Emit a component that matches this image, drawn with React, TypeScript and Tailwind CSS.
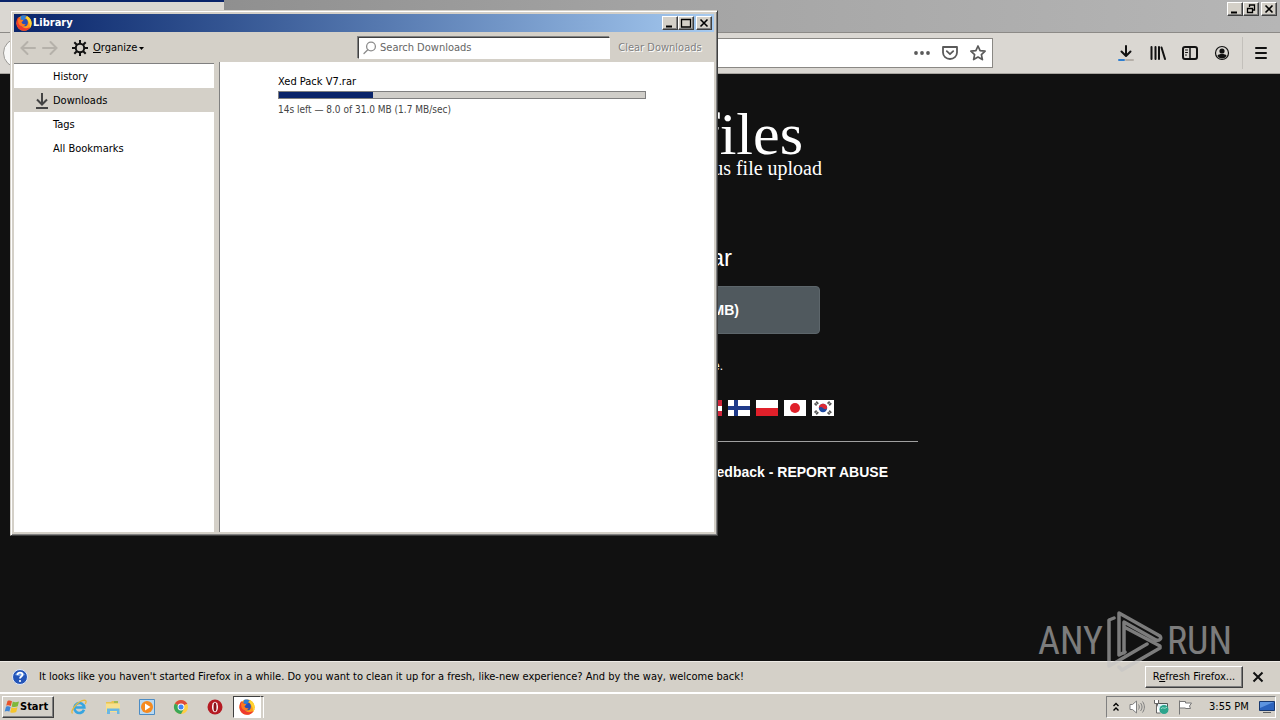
import type { ReactNode } from 'react'

const FOLDERS = ['History', 'Downloads', 'Tags', 'All Bookmarks']

const download = {
  name: 'Xed Pack V7.rar',
  done: 8.0,
  total: 31.0,
  status: '14s left — 8.0 of 31.0 MB (1.7 MB/sec)',
}

function FirefoxIcon({ className }: { className: string }) {
  return (
    <svg viewBox="0 0 16 16" className={className} aria-hidden="true">
      <circle cx="8" cy="8.2" r="7.6" fill="#ff9a1a" />
      <path d="M2.2 2.2C.2 5-.3 9 1.6 12.2c2 3.2 6 4.4 9.400 3 2.500-1 4.100-3 4.500-5.200-2 3.200-5.500 3.800-8 2.500-3-1.500-3.600-5-2-7.500z" fill="#ef3b2d" />
      <path d="M9.500.6c2.500.6 5 2.600 5.900 5.600.7 3-.1 5.600-1.900 7.300.8-2.500.4-5-1-6.900C11 4.700 10.200 3 9.500.6z" fill="#ffd531" />
      <circle cx="8" cy="7.400" r="3.900" fill="#2a4fb5" />
      <path d="M5 .9C7 .1 9.500.4 11 1.700 9.500 2 8.900 3 9.200 4.200L7 5.200 4.300 4z" fill="#2f7fd6" />
      <path d="M2.300 3.200l2.500 1.600c1-.3 2-.1 2.600.5-.2.900-1.200 1.200-1.900 2 .5 1.800 2.300 2.400 4.100 1.600-.6 2-3 2.900-5 1.900C2.300 9.600 1.700 6 2.300 3.200z" fill="#ff7a1c" />
    </svg>
  )
}

function CaptionButton({ label, children }: { label: string; children: ReactNode }) {
  return (
    <button
      type="button"
      aria-label={label}
      className="flex h-[14px] w-4 items-center justify-center border border-t-white border-r-[#404040] border-b-[#404040] border-l-white bg-[#d4d0c8] shadow-[inset_-1px_-1px_0_#808080]"
    >
      <svg viewBox="0 0 12 10" className="h-[10px] w-3 shrink-0" fill="none" stroke="#000">
        {children}
      </svg>
    </button>
  )
}

function CloseGlyph() {
  return <path d="M2.500 1.500l7 7M9.500 1.500l-7 7" strokeWidth="1.600" />
}

function ToolButton({ label, children }: { label: string; children: ReactNode }) {
  return (
    <button type="button" aria-label={label} className="flex size-4 items-center justify-center">
      <svg viewBox="0 0 16 16" className="size-4" fill="none" stroke="#111" strokeWidth="2" strokeLinecap="round" strokeLinejoin="round">
        {children}
      </svg>
    </button>
  )
}

function BrowserChrome() {
  return (
    <header>
      {/* Tab strip */}
      <div className="flex h-8 bg-linear-to-r from-[#858585] via-[#a3a3a3] to-[#b6b6b6]">
        <div className="w-[224px] border-t-2 border-[#0a246a] bg-[#dad7d2]" />
        <div className="flex flex-1 justify-end gap-[2px] pt-[2px] pr-[3px]">
          <div className="flex">
            <CaptionButton label="Minimize browser"><path d="M2 8.500h6" strokeWidth="2" /></CaptionButton>
            <CaptionButton label="Restore browser">
              <path d="M4.500 3V1h5v5H8M4 1h6M2.500 4.500h5v4h-5zM2 4.500h6" strokeWidth="1.300" />
            </CaptionButton>
          </div>
          <CaptionButton label="Close browser"><CloseGlyph /></CaptionButton>
        </div>
      </div>

      {/* Navigation bar */}
      <div className="flex h-[42px] items-center border-t border-b border-t-[#8c8a87] border-b-[#a8a5a0] bg-[#dad7d2] pr-[11px] pl-[3px]">
        <button type="button" aria-label="Go back" className="size-[30px] rounded-full border border-[#9a9894] bg-[#f8f8f7]" />
        <div className="ml-[200px] flex h-[30px] flex-1 items-center gap-3 border border-[#8a8884] bg-white pr-[6px]">
          <input aria-label="Address" className="h-full min-w-0 flex-1 outline-none" />
          <button type="button" aria-label="Page actions">
            <svg viewBox="0 0 16 16" className="size-4" fill="#5a5a5a">
              <circle cx="2" cy="8" r="1.900" /><circle cx="8" cy="8" r="1.900" /><circle cx="14" cy="8" r="1.900" />
            </svg>
          </button>
          <button type="button" aria-label="Save to Pocket">
            <svg viewBox="0 0 16 16" className="size-4" fill="none" stroke="#5a5a5a" strokeWidth="1.800" strokeLinecap="round" strokeLinejoin="round">
              <path d="M1 2h14v5.500a7 6.500 0 0 1-14 0zM4.800 6.200L8 9.200l3.200-3" />
            </svg>
          </button>
          <button type="button" aria-label="Bookmark this page">
            <svg viewBox="0 0 16 16" className="size-4" fill="none" stroke="#5a5a5a" strokeWidth="1.700" strokeLinejoin="round">
              <path d="M8 1l2.100 4.600 5 .6-3.700 3.400 1 5L8 12.100l-4.400 2.500 1-5L.9 6.200l5-.6z" />
            </svg>
          </button>
        </div>
        <div className="ml-[125px] flex items-center gap-4">
          <ToolButton label="Downloads">
            <path d="M8 1v9M3.500 6.500L8 11l4.500-4.500" />
            <path d="M1 15h5" stroke="#2f7fd0" />
            <path d="M8 15h7" stroke="#b5afa8" />
          </ToolButton>
          <ToolButton label="Library"><path d="M1.500 2v12M5.500 2v12M9 2v12M11.500 2.500L15 14" /></ToolButton>
          <ToolButton label="Sidebars">
            <rect x="1" y="2" width="14" height="12" rx="2" />
            <path d="M8 2v12" strokeWidth="1.500" />
            <path d="M3.500 5h2M3.500 7.500h2M3.500 10h1" strokeWidth="1" />
          </ToolButton>
          <ToolButton label="Account">
            <circle cx="8" cy="8" r="6.500" strokeWidth="1.200" />
            <circle cx="8" cy="6" r="2.600" fill="#111" stroke="none" />
            <path d="M3.500 10.500c1-2 8-2 9 0-1 4-8 4-9 0z" fill="#111" stroke="none" />
          </ToolButton>
          <div className="-ml-1 flex h-8 items-center border-l border-[#c3c0bb] pl-[10px]">
            <ToolButton label="Menu"><path d="M3 3h10M3 8h10M3 13h10" /></ToolButton>
          </div>
        </div>
      </div>
    </header>
  )
}

function Flags() {
  return (
    <div className="flex justify-end gap-[6px] pr-[84px]">
      <svg viewBox="0 0 22 16" className="h-4 w-[22px]" role="img" aria-label="Danish">
        <path d="M0 0h22v16H0z" fill="#d0253a" /><path d="M0 6h22v4H0zM6 0h4v16H6zM17 6h5v5h-5z" fill="#fff" />
      </svg>
      <svg viewBox="0 0 22 16" className="h-4 w-[22px]" role="img" aria-label="Finnish">
        <path d="M0 0h22v16H0z" fill="#fff" /><path d="M0 6h22v4H0zM6 0h4v16H6z" fill="#1f3a8a" />
      </svg>
      <svg viewBox="0 0 22 16" className="h-4 w-[22px]" role="img" aria-label="Polish">
        <path d="M0 0h22v8H0z" fill="#fff" /><path d="M0 8h22v8H0z" fill="#e0202a" />
      </svg>
      <svg viewBox="0 0 22 16" className="h-4 w-[22px]" role="img" aria-label="Japanese">
        <path d="M0 0h22v16H0z" fill="#fff" /><circle cx="11" cy="8" r="5" fill="#e0202a" />
      </svg>
      <svg viewBox="0 0 22 16" className="h-4 w-[22px]" role="img" aria-label="Korean">
        <path d="M0 0h22v16H0z" fill="#fff" />
        <circle cx="11" cy="8" r="4.200" fill="#1f4aa0" />
        <path d="M6.800 8a4.200 4.200 0 0 1 8.400 0c-1.500 2-3 1-4.200 0s-2.700-1.500-4.200 0z" fill="#dc2a35" />
        <path d="M3 5l3-3M16 2l3 3M3 11l3 3M16 14l3-3" stroke="#555" strokeWidth="3" strokeDasharray="1.800 .4" />
      </svg>
    </div>
  )
}

function SitePage() {
  return (
    <main className="flex-1 bg-[#111] font-['Liberation_Sans',sans-serif] text-white">
      <div className="mx-auto w-[556px] pt-8 text-right">
        <h1 className="pr-[115px] font-['Liberation_Serif',serif] text-[60px] leading-[56px]">files</h1>
        <p className="-mt-1 pr-[96px] font-['Liberation_Serif',serif] text-xl leading-5">us file upload</p>
        <h2 className="mt-16 pr-[186px] text-2xl leading-8">ar</h2>
        <div className="mt-3 flex justify-end pr-[98px]">
          <button type="button" className="h-12 w-[360px] rounded-sm border border-[#5d666b] bg-[#50595e] pr-20 text-right text-sm font-bold">
            MB)
          </button>
        </div>
        <p className="mt-6 mb-[26px] pr-[195px] text-xs leading-4">e.</p>
        <Flags />
        <hr className="mt-[25px] border-[#a0a0a0]" />
        <p className="mt-5 pr-[30px] text-sm leading-5 font-bold">
          <a href="#feedback">Feedback</a> - <a href="#abuse">REPORT ABUSE</a>
        </p>
      </div>
    </main>
  )
}

function LibraryWindow() {
  const percent = (download.done / download.total) * 100
  return (
    <section
      aria-label="Library"
      className="absolute top-[10px] left-[10px] flex h-[526px] w-[708px] flex-col border border-t-[#d4d0c8] border-r-[#404040] border-b-[#404040] border-l-[#d4d0c8] bg-[#d4d0c8] p-[3px] shadow-[inset_1px_1px_0_#fff,inset_-1px_-1px_0_#808080]"
    >
      <div className="flex h-[18px] items-center bg-linear-to-r from-[#0a246a] to-[#a6caf0] px-[2px] text-white">
        <FirefoxIcon className="size-4" />
        <h2 className="ml-[1px] flex-1 text-[11px] font-bold">Library</h2>
        <CaptionButton label="Minimize"><path d="M2 8.500h6" strokeWidth="2" /></CaptionButton>
        <CaptionButton label="Maximize"><path d="M1.500 1v8h9V1M1 1.500h10" strokeWidth="1.300" /></CaptionButton>
        <div className="ml-[2px]">
          <CaptionButton label="Close"><CloseGlyph /></CaptionButton>
        </div>
      </div>

      {/* Toolbar */}
      <div className="flex h-[30px] items-center pt-[2px] pr-[12px] pl-[6px]">
        <button type="button" aria-label="Back" disabled>
          <svg viewBox="0 0 16 16" className="size-4" fill="none" stroke="#b5b1aa" strokeWidth="2" strokeLinecap="round"><path d="M15 8H1.500M7.500 2L1.500 8l6 6" /></svg>
        </button>
        <button type="button" aria-label="Forward" disabled className="ml-[6px]">
          <svg viewBox="0 0 16 16" className="size-4" fill="none" stroke="#b5b1aa" strokeWidth="2" strokeLinecap="round"><path d="M1 8h13.500M8.500 2l6 6-6 6" /></svg>
        </button>
        <button type="button" className="ml-[14px] flex items-center">
          <svg viewBox="0 0 16 16" className="size-4" fill="none" stroke="#111" strokeWidth="2">
            <circle cx="8" cy="8" r="4.200" />
            <path d="M8 0v3.500M8 12.500V16M0 8h3.500M12.500 8H16M2.300 2.300l2.500 2.500M11.200 11.200l2.500 2.500M13.700 2.300l-2.500 2.500M4.800 11.200l-2.500 2.500" />
          </svg>
          <span className="ml-[5px]"><u>O</u>rganize</span>
          <svg viewBox="0 0 5 3" className="ml-[2px] h-[3px] w-[5px]"><path d="M0 0h5L2.500 3z" /></svg>
        </button>
        <label className="ml-auto flex h-[22px] w-[252px] items-center border border-t-[#404040] border-r-white border-b-white border-l-[#404040] bg-white pl-1 shadow-[-1px_-1px_0_#808080]">
          <svg viewBox="0 0 14 14" className="size-[14px]" fill="none" stroke="#8c8c8c" strokeWidth="1.300" strokeLinecap="round">
            <circle cx="8" cy="5.500" r="4.400" /><path d="M4.800 8.700L1 12.500" />
          </svg>
          <input type="search" aria-label="Search Downloads" placeholder="Search Downloads" className="ml-[3px] min-w-0 flex-1 outline-none placeholder:text-[#666]" />
        </label>
        <button type="button" disabled className="ml-2 w-[84px] whitespace-nowrap text-[#808080] [text-shadow:1px_1px_0_#fff]">
          Clear Downloads
        </button>
      </div>

      <div className="flex min-h-0 flex-1">
        <nav className="mt-[1px] w-[200px] border-t border-[#808080] bg-white">
          {FOLDERS.map((folder) => (
            <a
              key={folder}
              href={'#' + folder}
              className={'flex h-6 items-center pt-[2px] pl-[21px] ' + (folder === 'Downloads' ? 'bg-[#d4d0c8]' : '')}
            >
              <span className="mr-[2px] flex w-4">
                {folder === 'Downloads' && (
                  <svg viewBox="0 0 16 16" className="size-4" fill="none" stroke="#444" strokeWidth="2">
                    <path d="M7 0v11M2 6.500l5 5 5-5M1 15h12" />
                  </svg>
                )}
              </span>
              {folder}
            </a>
          ))}
        </nav>
        <div className="w-[6px] border-r border-[#808080]" />
        <div className="flex-1 bg-white pt-[13px] pr-[68px] pl-[58px]">
          <p className="leading-[14px]">{download.name}</p>
          <div
            role="progressbar"
            aria-label={download.name}
            aria-valuenow={Math.round(percent)}
            className="mt-[2px] h-2 border border-[#808080] bg-[#d0cec9]"
          >
            <div className="h-full bg-[#0a246a]" style={{ width: percent + '%' }} />
          </div>
          <p className="mt-1 text-[10px] leading-[14px] text-[#444]">{download.status}</p>
        </div>
      </div>
    </section>
  )
}

function NotificationBar() {
  return (
    <div className="flex h-[31px] items-center border-t border-[#eeebe6] bg-[#d4d0c8] pr-4 pl-3">
      <svg viewBox="0 0 16 16" className="size-4" aria-hidden="true">
        <circle cx="8" cy="8" r="7.500" fill="#2455b8" stroke="#dfe9fa" />
        <path d="M3 6a5.500 5 0 0 1 10 0c-3 1.500-7 1.500-10 0z" fill="#6e9be6" />
        <path d="M5.500 6c0-3.200 5-3 5-.2C10.500 7.500 8 7.600 8 9.500" fill="none" stroke="#fff" strokeWidth="1.800" />
        <circle cx="8" cy="12" r="1.100" fill="#fff" />
      </svg>
      <p className="ml-[11px] flex-1 whitespace-nowrap">
        It looks like you haven't started Firefox in a while. Do you want to clean it up for a fresh, like-new experience? And by the way, welcome back!
      </p>
      <button
        type="button"
        className="h-[22px] w-[98px] whitespace-nowrap border border-t-white border-r-[#404040] border-b-[#404040] border-l-white shadow-[inset_-1px_-1px_0_#808080]"
      >
        R<u>e</u>fresh Firefox...
      </button>
      <button type="button" aria-label="Dismiss" className="ml-[9px]">
        <svg viewBox="0 0 12 12" className="size-3" stroke="#111" strokeWidth="2"><path d="M1.500 1.500l9 9M10.500 1.500l-9 9" /></svg>
      </button>
    </div>
  )
}

function QuickLaunch() {
  return (
    <div className="ml-[17px] flex items-center gap-[18px]">
      <button type="button" aria-label="Internet Explorer">
        <svg viewBox="0 0 16 16" className="size-4" fill="none">
          <path d="M13 10.800A5 5 0 1 1 13.300 8.500H4.500" stroke="#37a5e0" strokeWidth="2.600" />
          <path d="M1.500 14.500C-1 12 7 1.500 13.500 1.200c2.200 0 1.800 2 .8 3.800" stroke="#e8b93c" strokeWidth="1.300" />
        </svg>
      </button>
      <button type="button" aria-label="Windows Explorer">
        <svg viewBox="0 0 16 16" className="size-4">
          <path d="M1 3h5l1-1h6v3H1z" fill="#e9c351" /><path d="M1 4.500h14V13H1z" fill="#f7e08d" />
          <path d="M2 9.500h12.500V15H12v-3H5v3H2z" fill="#6bb7e3" /><path d="M9 3h4" stroke="#5fb257" />
        </svg>
      </button>
      <button type="button" aria-label="Media Player">
        <svg viewBox="0 0 16 16" className="size-4">
          <path d="M.5.500h15v15H.5z" fill="#b9d9f2" stroke="#4c8cc4" />
          <circle cx="8" cy="8" r="6" fill="#f58a1f" /><path d="M6 4.500v7L11.500 8z" fill="#fff" />
        </svg>
      </button>
      <button type="button" aria-label="Chrome">
        <svg viewBox="0 0 16 16" className="size-4">
          <circle cx="8" cy="8" r="7" fill="#ffce44" />
          <path d="M8 8L1.900 4.500A7 7 0 0 1 14.100 4.500z" fill="#de4b3b" /><path d="M8 8L1.900 4.500A7 7 0 0 0 8 15l2.800-5z" fill="#3aa757" />
          <path d="M8 4.500h6.100" stroke="#de4b3b" /><circle cx="8" cy="8" r="3.400" fill="#fff" /><circle cx="8" cy="8" r="2.500" fill="#4285f4" />
        </svg>
      </button>
      <button type="button" aria-label="Opera">
        <svg viewBox="0 0 16 16" className="size-4">
          <circle cx="8" cy="8" r="7.500" fill="#b51a22" /><ellipse cx="8" cy="8" rx="3" ry="5.300" fill="#fff" /><ellipse cx="8" cy="8" rx="1.500" ry="4.500" fill="#8c1219" />
        </svg>
      </button>
    </div>
  )
}

function Taskbar() {
  return (
    <footer className="flex h-7 items-center border-t-2 border-white bg-[#d4d0c8] pr-1 pl-[2px]">
      <button
        type="button"
        className="flex h-[22px] w-[52px] items-center border border-t-white border-r-[#404040] border-b-[#404040] border-l-white pl-[1px] font-bold shadow-[inset_-1px_-1px_0_#808080]"
      >
        <svg viewBox="0 0 16 16" className="size-4 shrink-0">
          <path d="M3.500 2c1.500-.8 3-.6 4.500.2L6.800 7C5.300 6.200 3.800 6 2.200 6.800z" fill="#e8532a" />
          <path d="M8.800 2.600c1.500.8 3.500.9 6.200-.2l-1.300 4.800c-2 1-4.400 1-6 .2z" fill="#7fb83a" />
          <path d="M2 7.700c1.600-.8 3-.6 4.600.2l-1.200 4.700c-1.500-.8-3-.9-4.700-.1z" fill="#3f86d6" />
          <path d="M7.500 8.300c1.600.8 4 .8 6 0l-1.300 4.800c-2 1-4.300.9-6 .1z" fill="#f6c52c" />
        </svg>
        Start
      </button>
      <QuickLaunch />
      <button
        type="button"
        aria-label="Firefox"
        className="ml-[10px] flex h-[22px] w-7 items-center justify-center border border-t-[#404040] border-r-white border-b-white border-l-[#404040] bg-white"
      >
        <FirefoxIcon className="size-4" />
      </button>
      <div className="h-[22px] w-[3px] border-t border-r border-t-[#404040] border-r-white" />

      {/* Tray */}
      <div className="ml-auto flex h-[22px] w-[170px] items-center border border-t-[#808080] border-r-white border-b-white border-l-[#808080] pl-[5px]">
        <svg viewBox="0 0 8 10" className="h-[10px] w-2" fill="none" stroke="#000" strokeWidth="1.400"><path d="M1.500 4L4 1.500 6.500 4M1.500 8.500L4 6l2.500 2.500" /></svg>
        <svg viewBox="0 0 16 16" className="ml-[9px] size-4" fill="none" stroke="#808080">
          <path d="M1 5.500h2.500L7.500 2v12l-4-3.500H1z" fill="#fff" /><path d="M9.500 5.500c1 1.500 1 3.500 0 5M11.500 4c2 2.500 2 5.500 0 8M13.500 2.500c2.500 3.500 2.500 7.500 0 11" />
        </svg>
        <svg viewBox="0 0 16 16" className="ml-2 size-4">
          <path d="M4.500 4.500h10v8h-10z" fill="#dff1f5" stroke="#555" /><path d="M1.500 1v3.500h4V1M3.500 4.500V14h4" fill="#fff" stroke="#666" />
          <circle cx="11" cy="10.500" r="4.500" fill="#2ca58d" /><path d="M8 10c2-3 3 1 6-2" stroke="#a9e3d0" fill="none" />
        </svg>
        <svg viewBox="0 0 16 16" className="ml-2 size-4" stroke="#777" fill="#fff"><path d="M2.500 15.500v-14M2.500 2.500h6v1.500h6l-2 3 1 2.500h-5V9h-6z" /></svg>
        <time className="ml-4 flex-1 whitespace-nowrap">3:55 PM</time>
        <svg viewBox="0 0 16 14" className="h-[14px] w-4"><path d="M.5 1.500h15v9H.5z" fill="#2b63bd" stroke="#17386f" /><path d="M1 2h14L1 8z" fill="#5d94df" /><path d="M4 12.500h8" stroke="#606060" /></svg>
      </div>
    </footer>
  )
}

function Watermark() {
  return (
    <div className="pointer-events-none absolute right-12 bottom-12 flex items-center gap-1 font-['Roboto_Condensed','Liberation_Sans_Narrow',sans-serif] text-[38px] text-[#c4c4c4] opacity-60">
      <span>ANY</span>
      <svg viewBox="0 0 56 62" className="h-[62px] w-14" fill="none" stroke="currentColor" strokeWidth="3.500" strokeLinecap="round" strokeLinejoin="round">
        <path d="M7 8L2 10v47l9-5L40 35M12 46V3l41 23v3l-4 1-32-18v17M17 26l36 10v2L15 60l-3-3M12 46l23-14" stroke="none" />
        <path d="M7 8L2 10v46l9-5 29-17M12 45V3l41 23c2 3-1 5-4 4L17 12v31M19 18l34 18v2L15 60l-3-3M12 45l6-3" />
      </svg>
      <span>RUN</span>
    </div>
  )
}

export default function App() {
  return (
    <div className="relative flex min-h-screen flex-col overflow-hidden bg-[#111] font-['DejaVu_Sans_Condensed','Noto_Sans',sans-serif] text-[11px] leading-4 text-black">
      <BrowserChrome />
      <SitePage />
      <NotificationBar />
      <Taskbar />
      <LibraryWindow />
      <Watermark />
    </div>
  )
}
